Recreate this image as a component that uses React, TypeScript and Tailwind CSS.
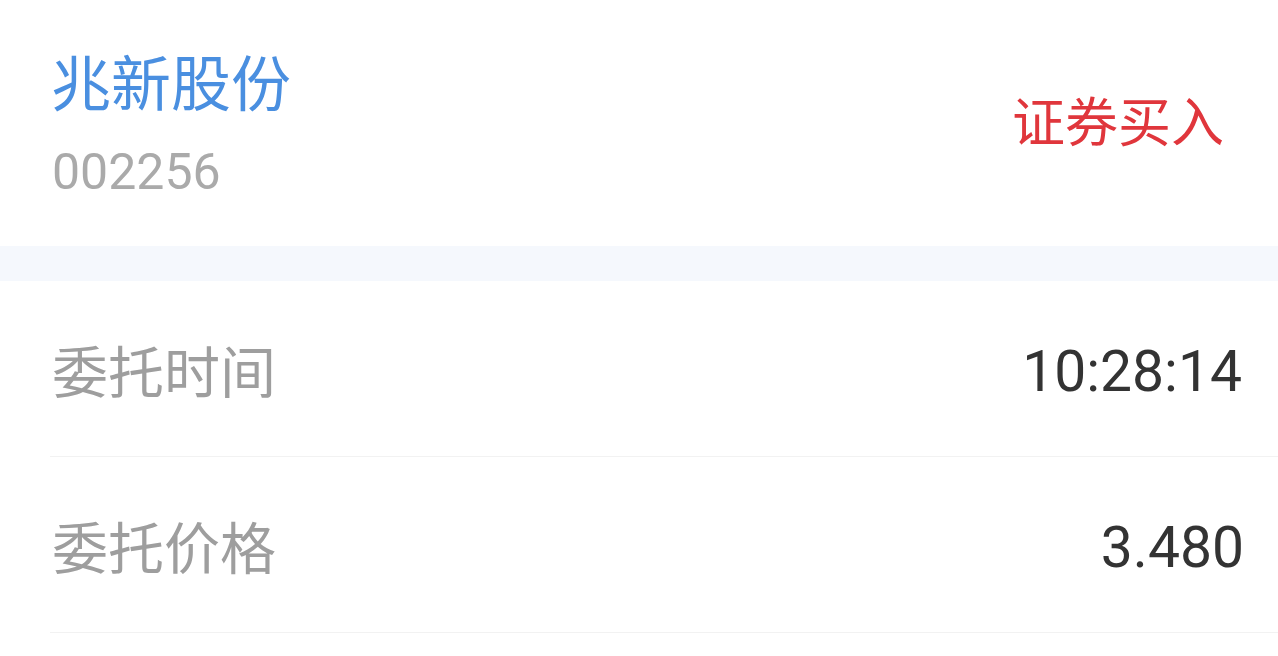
import React from "react";

export default function App() {
  const cjk = { fontFamily: '"Noto Sans CJK SC", "Noto Sans", sans-serif' };
  const num = { fontFamily: 'Roboto, "Noto Sans CJK SC", sans-serif' };
  return (
    <div className="w-[1278px] h-[656px] bg-white overflow-hidden">
      <div className="h-[246px] flex items-center justify-between pl-[51px] pr-[54px]">
        <div className="flex flex-col">
          <div className="text-[60px] leading-[60px] text-[#4a8fe0]" style={cjk}>
            兆新股份
          </div>
          <div className="mt-[37px] ml-[1px] text-[50px] leading-[50px] text-[#aaaaaa]" style={num}>
            002256
          </div>
        </div>
        <div className="mb-[8px] text-[53px] leading-[53px] text-[#e0363c]" style={cjk}>
          证券买入
        </div>
      </div>
      <div className="h-[35px] bg-[#f5f8fd]" />
      <div className="ml-[50px]">
        <div className="h-[176px] flex items-center justify-between pr-[36px] border-b border-[#f2f2f2]">
          <div className="ml-[2px] text-[56px] leading-[56px] text-[#9e9e9e]" style={cjk}>
            委托时间
          </div>
          <div className="pt-[5px] text-[57px] leading-[57px] text-[#333333]" style={num}>
            10:28:14
          </div>
        </div>
        <div className="h-[176px] flex items-center justify-between pr-[34px] border-b border-[#f2f2f2]">
          <div className="ml-[2px] text-[56px] leading-[56px] text-[#9e9e9e]" style={cjk}>
            委托价格
          </div>
          <div className="pt-[5px] text-[57px] leading-[57px] text-[#333333]" style={num}>
            3.480
          </div>
        </div>
      </div>
    </div>
  );
}
